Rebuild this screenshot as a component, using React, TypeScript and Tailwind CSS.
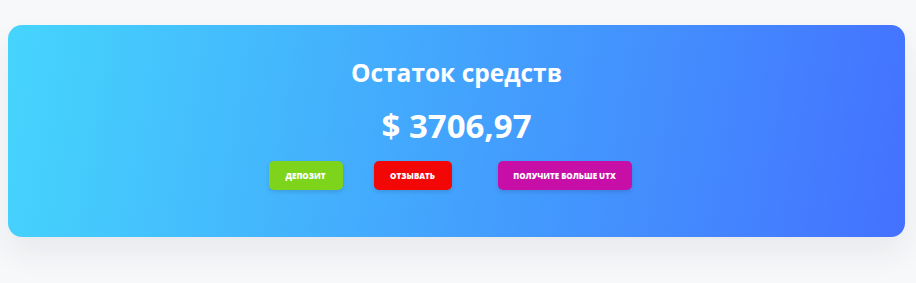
import React from "react";

export default function App() {
  return (
    <div
      className="w-[916px] h-[283px] bg-[#f7f8fa] pt-[25px] pl-[8px] pr-[11px]"
      style={{ fontFamily: '"Open Sans", "Noto Sans", sans-serif' }}
    >
      <div className="h-[212px] rounded-[14px] bg-[linear-gradient(100deg,#45d5fc_0%,#43a3fd_50%,#4471ff_100%)] shadow-[0_16px_30px_rgba(30,40,60,0.07)] flex flex-col items-center pt-[31px]">
        <h2 className="text-white font-bold text-[24.5px] leading-[33px]">Остаток средств</h2>
        <div className="text-white font-bold text-[33px] leading-[44px] mt-[15px]">$ 3706,97</div>
        <div className="flex items-center mt-[13px] pr-[13px]">
          <button className="w-[74px] h-[29px] rounded-[5px] bg-[#7ed41a] text-white font-extrabold text-[8px] uppercase shadow-[0_2px_4px_rgba(0,0,0,0.12)]">
            Депозит
          </button>
          <button className="ml-[31px] w-[78px] h-[29px] rounded-[5px] bg-[#f20606] text-white font-extrabold text-[8px] uppercase shadow-[0_2px_4px_rgba(0,0,0,0.12)]">
            Отзывать
          </button>
          <button className="ml-[46px] w-[134px] h-[29px] rounded-[5px] bg-[#c70fa8] text-white font-extrabold text-[8px] uppercase shadow-[0_2px_4px_rgba(0,0,0,0.12)]">
            Получите больше UTX
          </button>
        </div>
      </div>
    </div>
  );
}
